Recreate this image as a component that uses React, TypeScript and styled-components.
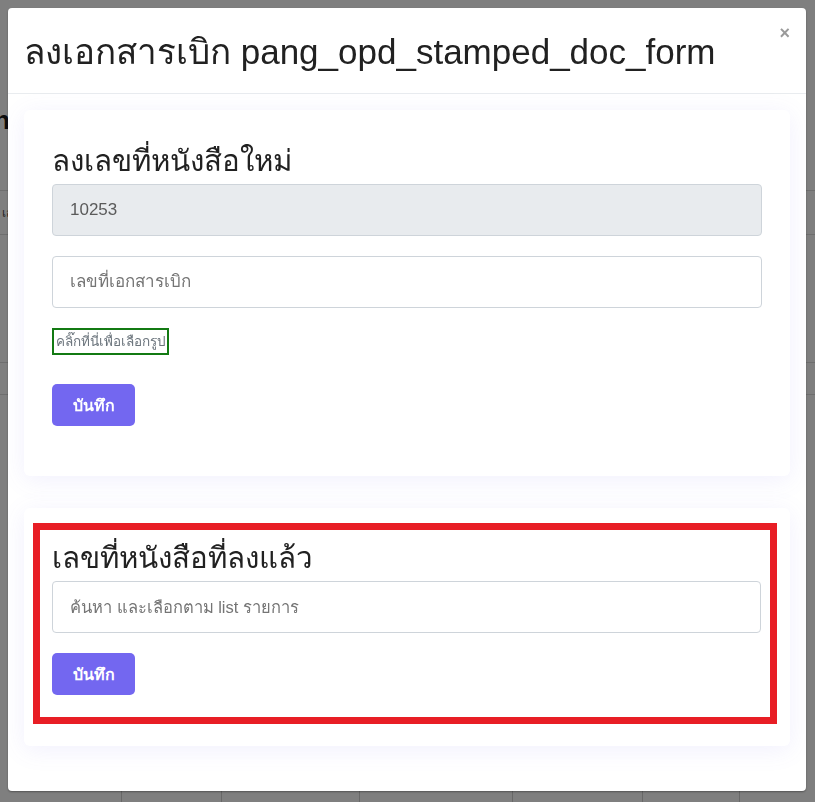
import React from "react";
import styled, { createGlobalStyle } from "styled-components";

const Global = createGlobalStyle`
  html, body { margin: 0; padding: 0; }
  body {
    font-family: "Liberation Sans", Arial, "Noto Sans", sans-serif;
    background: #ffffff;
    width: 815px;
    height: 802px;
    overflow: hidden;
  }
`;

/* ---------- background page (dimmed) ---------- */
const Page = styled.div`
  width: 815px;
  height: 802px;
  background: #ffffff;
  display: flex;
  flex-direction: column;
`;

const PageHeading = styled.h1`
  margin: 106px 0 0 -6px;
  font-size: 26px;
  font-weight: 700;
  color: #1a1a1a;
  line-height: 28px;
`;

const PageTable = styled.div`
  margin-top: 56px;
  display: flex;
  flex-direction: column;
`;

const PageRow = styled.div<{ $h: number }>`
  height: ${(p) => p.$h}px;
  border-top: 1px solid #dcdcdc;
  font-size: 12px;
  color: #444;
  display: flex;
  align-items: center;
  padding-left: 2px;
`;

const PageFooter = styled.div`
  margin-top: auto;
  height: 12px;
  display: grid;
  grid-template-columns: 122px 100px 138px 153px 130px 97px 1fr;
`;

const FooterCell = styled.div`
  border-right: 1px solid #d0d0d0;
`;

/* ---------- modal ---------- */
const Backdrop = styled.div`
  position: fixed;
  inset: 0;
  background: rgba(0, 0, 0, 0.5);
  display: flex;
  align-items: flex-start;
  justify-content: flex-start;
  padding: 8px 9px 11px 8px;
  box-sizing: border-box;
`;

const Modal = styled.div`
  width: 798px;
  height: 783px;
  background: #ffffff;
  border-radius: 4px;
  box-shadow: 0 1px 2px rgba(0, 0, 0, 0.35);
  display: flex;
  flex-direction: column;
  overflow: hidden;
`;

const ModalHeader = styled.div`
  height: 86px;
  box-sizing: border-box;
  border-bottom: 1px solid #e9ecef;
  display: flex;
  align-items: flex-start;
  justify-content: space-between;
  padding: 23px 16px 0 16px;
`;

const ModalTitle = styled.h2`
  margin: 0;
  font-size: 35px;
  font-weight: 400;
  line-height: 42px;
  color: #212121;
  font-family: "Liberation Sans", Arial, sans-serif;
`;

const CloseButton = styled.button`
  border: none;
  background: transparent;
  padding: 0;
  margin: -9px 0 0 0;
  font-size: 18px;
  line-height: 22px;
  font-weight: 700;
  color: #9a9a9a;
  font-family: "Liberation Sans", Arial, sans-serif;
  cursor: pointer;
`;

const ModalBody = styled.div`
  padding: 16px;
  display: flex;
  flex-direction: column;
  gap: 32px;
`;

const Card = styled.div<{ $pad: string }>`
  background: #ffffff;
  border-radius: 6px;
  box-shadow: 0 4px 24px 0 rgba(115, 103, 240, 0.1);
  padding: ${(p) => p.$pad};
  display: flex;
  flex-direction: column;
`;

const Highlight = styled.div`
  border: 7px solid #e81e25;
  padding: 9px 9px 22px 12px;
  display: flex;
  flex-direction: column;
`;

const CardTitle = styled.h3`
  margin: 0;
  font-size: 29.5px;
  line-height: 36px;
  font-weight: 500;
  color: #212121;
  font-family: "Noto Sans", "Liberation Sans", sans-serif;
`;

const Input = styled.input<{ $top: number; $size?: number }>`
  margin-top: ${(p) => p.$top}px;
  height: 52px;
  width: 100%;
  box-sizing: border-box;
  border: 1px solid #ced4da;
  border-radius: 4px;
  padding: 0 17px;
  font-size: ${(p) => p.$size ?? 17}px;
  color: #5a5a5a;
  background: #ffffff;
  font-family: "Liberation Sans", Arial, sans-serif;
  &:disabled {
    background: #e8ebee;
  }
  &::placeholder {
    color: #757575;
  }
`;

const PickLabel = styled.label`
  margin-top: 20px;
  align-self: flex-start;
  border: 2px solid #137a13;
  padding: 3px 1px 3px 2px;
  font-size: 13.5px;
  line-height: 17px;
  color: #6c757d;
  font-family: "Liberation Sans", Arial, sans-serif;
`;

const SaveButton = styled.button<{ $top: number }>`
  margin-top: ${(p) => p.$top}px;
  align-self: flex-start;
  width: 83px;
  height: 42px;
  border: none;
  border-radius: 5px;
  background: #7367f0;
  color: #ffffff;
  font-size: 16px;
  font-weight: 700;
  font-family: "Liberation Sans", Arial, sans-serif;
  cursor: pointer;
`;

export default function App() {
  return (
    <>
      <Global />
      <Page>
        <PageHeading>n</PageHeading>
        <PageTable>
          <PageRow $h={43}>เล</PageRow>
          <PageRow $h={127} />
          <PageRow $h={31} />
          <PageRow $h={40} />
        </PageTable>
        <PageFooter>
          <FooterCell />
          <FooterCell />
          <FooterCell />
          <FooterCell />
          <FooterCell />
          <FooterCell />
          <div />
        </PageFooter>
      </Page>
      <Backdrop>
        <Modal>
          <ModalHeader>
            <ModalTitle>ลงเอกสารเบิก pang_opd_stamped_doc_form</ModalTitle>
            <CloseButton aria-label="close">×</CloseButton>
          </ModalHeader>
          <ModalBody>
            <Card $pad="32px 28px 50px 28px">
              <CardTitle>ลงเลขที่หนังสือใหม่</CardTitle>
              <Input $top={6} disabled value="10253" readOnly />
              <Input $top={20} placeholder="เลขที่เอกสารเบิก" />
              <PickLabel>คลิ๊กที่นี่เพื่อเลือกรูป</PickLabel>
              <SaveButton $top={29}>บันทึก</SaveButton>
            </Card>
            <Card $pad="15px 13px 22px 9px">
              <Highlight>
                <CardTitle>เลขที่หนังสือที่ลงแล้ว</CardTitle>
                <Input $top={6} $size={16.5} placeholder="ค้นหา และเลือกตาม list รายการ" />
                <SaveButton $top={20}>บันทึก</SaveButton>
              </Highlight>
            </Card>
          </ModalBody>
        </Modal>
      </Backdrop>
    </>
  );
}
